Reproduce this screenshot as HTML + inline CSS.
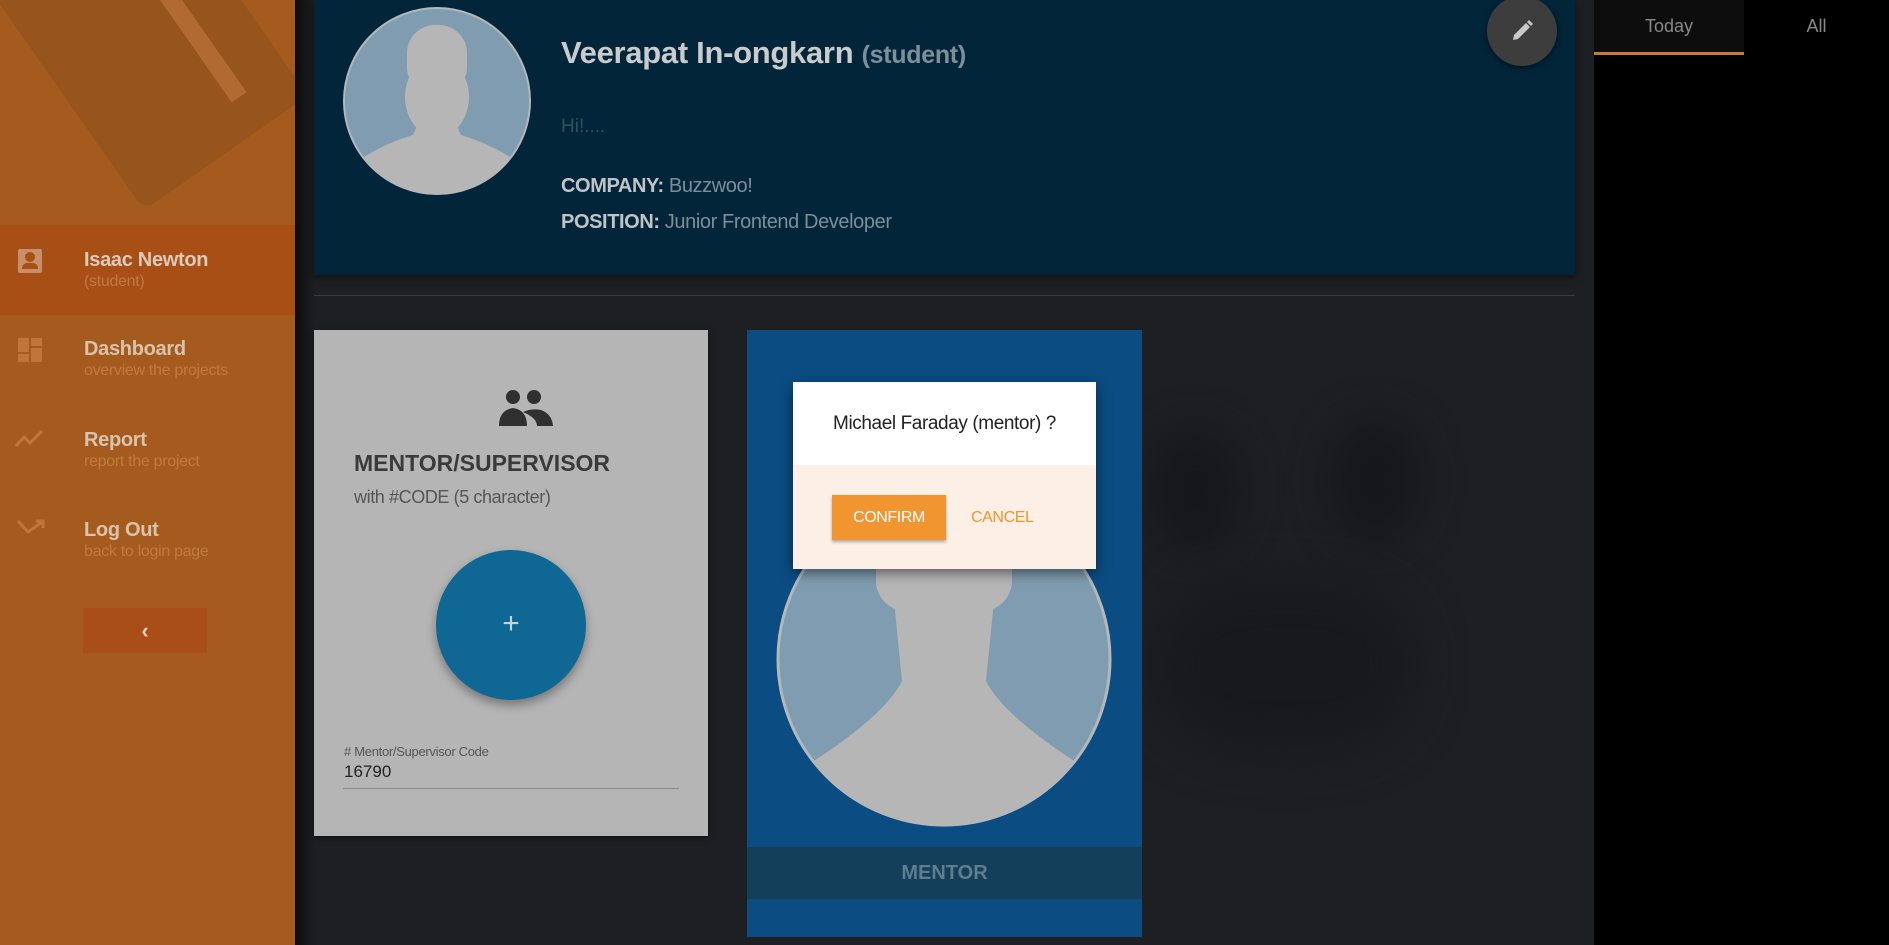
<!DOCTYPE html>
<html><head><meta charset="utf-8"><style>
*{margin:0;padding:0;box-sizing:border-box}
body{width:1889px;height:945px;overflow:hidden;background:#1e1f22;font-family:"Liberation Sans",sans-serif;position:relative}
.abs{position:absolute}
.side{left:0;top:0;width:295px;height:945px;background:#a65b1e;overflow:hidden}
.t{font-weight:bold;font-size:20px;color:#d8c4ae;letter-spacing:-0.3px}
.s{font-size:16px;color:#c17a3e;letter-spacing:-0.3px}
</style></head><body>
<div class="abs side">
 <div class="abs" style="left:40px;top:-120px;width:200px;height:300px;background:#97541c;transform:rotate(-35deg);border-radius:12px"></div>
 <div class="abs" style="left:190px;top:-30px;width:18px;height:140px;background:#b06a32;transform:rotate(-35deg)"></div>
 <div class="abs" style="left:0;top:225px;width:295px;height:90px;background:#a84f15"></div>
 <div class="abs" style="left:18px;top:249px;width:24px;height:24px;background:#c8906a;border-radius:2px"></div>
 <div class="abs" style="left:25px;top:252px;width:10px;height:10px;background:#a84f15;border-radius:50%"></div>
 <div class="abs" style="left:22px;top:263px;width:16px;height:6px;background:#a84f15;border-radius:5px 5px 0 0"></div>
 <div class="abs t" style="left:84px;top:249px;color:#dccabb">Isaac Newton</div>
 <div class="abs s" style="left:84px;top:273px">(student)</div>
 <div class="abs" style="left:18px;top:338px;width:11px;height:14px;background:#c0763a"></div>
 <div class="abs" style="left:31px;top:338px;width:11px;height:8px;background:#c0763a"></div>
 <div class="abs" style="left:18px;top:354px;width:11px;height:8px;background:#c0763a"></div>
 <div class="abs" style="left:31px;top:348px;width:11px;height:14px;background:#c0763a"></div>
 <div class="abs t" style="left:84px;top:338px">Dashboard</div>
 <div class="abs s" style="left:84px;top:362px">overview the projects</div>
 <svg class="abs" style="left:14px;top:428px" width="32" height="22"><path d="M2 18 L10 9 L16 15 L28 3" stroke="#c0763a" stroke-width="3" fill="none"/></svg>
 <div class="abs t" style="left:84px;top:429px">Report</div>
 <div class="abs s" style="left:84px;top:453px">report the project</div>
 <svg class="abs" style="left:16px;top:518px" width="30" height="20"><path d="M2 3 L12 14 L26 4 M20 3 H27 V10" stroke="#c0763a" stroke-width="3" fill="none"/></svg>
 <div class="abs t" style="left:84px;top:519px">Log Out</div>
 <div class="abs s" style="left:84px;top:543px">back to login page</div>
 <div class="abs" style="left:83px;top:608px;width:124px;height:45px;background:#a84e16;color:#e6d2c2;font-size:22px;font-weight:bold;text-align:center;line-height:45px">‹</div>
</div>
<div class="abs" style="left:295px;top:0;width:20px;height:945px;background:linear-gradient(90deg,#0c0c0e,#1e1f22)"></div>
<div class="abs" style="left:1150px;top:430px;width:90px;height:120px;border-radius:50%;background:#16171a;filter:blur(20px)"></div>
<div class="abs" style="left:1330px;top:420px;width:90px;height:120px;border-radius:50%;background:#16171a;filter:blur(20px)"></div>
<div class="abs" style="left:1160px;top:580px;width:250px;height:170px;border-radius:40%;background:#18191c;filter:blur(25px)"></div>
<div class="abs" style="left:314px;top:0;width:1261px;height:275px;background:#022539;box-shadow:0 2px 6px rgba(0,0,0,.5)"></div>
<svg class="abs" style="left:343px;top:7px" width="188" height="188"><defs><clipPath id="c1"><circle cx="94" cy="94" r="93"/></clipPath></defs><circle cx="94" cy="94" r="93" fill="#7f9cb0" stroke="#b4b8ba" stroke-width="2"/><g clip-path="url(#c1)" fill="#b6b6b6"><rect x="64" y="18" width="60" height="70" rx="28"/><ellipse cx="94" cy="90" rx="32" ry="40"/><path d="M0 165 Q30 140 70 128 L78 110 L110 110 L118 128 Q158 140 188 165 V188 H0Z"/></g></svg>
<div class="abs" style="left:561px;top:35px;font-size:31px;font-weight:bold;color:#c9cbcd;letter-spacing:-0.3px">Veerapat In-ongkarn <span style="font-size:25px;color:#7f8f9a">(student)</span></div>
<div class="abs" style="left:561px;top:116px;font-size:19px;color:#33505f">Hi!....</div>
<div class="abs" style="left:561px;top:175px;font-size:20px;color:#7d8e99;letter-spacing:-0.4px"><b style="color:#c0c4c6">COMPANY:</b> Buzzwoo!</div>
<div class="abs" style="left:561px;top:211px;font-size:20px;color:#7d8e99;letter-spacing:-0.4px"><b style="color:#c0c4c6">POSITION:</b> Junior Frontend Developer</div>
<div class="abs" style="left:1487px;top:-4px;width:70px;height:70px;border-radius:50%;background:#3d3d3d;box-shadow:0 2px 6px rgba(0,0,0,.5)"></div>
<svg class="abs" style="left:1508px;top:17px" width="28" height="28"><path d="M5 23 L6 18 L18 6 L22 10 L10 22 Z M19 5 L21 3 L25 7 L23 9 Z" fill="#c8c8c8"/></svg>
<div class="abs" style="left:314px;top:295px;width:1261px;height:1px;background:#3a3b3e"></div>
<div class="abs" style="left:1594px;top:0;width:295px;height:945px;background:#000"></div>
<div class="abs" style="left:1594px;top:0;width:150px;height:55px;background:#0d0d0d;border-bottom:3px solid #c67a35;text-align:center;line-height:53px;color:#888;font-size:18px">Today</div>
<div class="abs" style="left:1744px;top:0;width:145px;height:55px;text-align:center;line-height:53px;color:#888;font-size:18px">All</div>
<div class="abs" style="left:314px;top:330px;width:394px;height:506px;background:#b5b5b5;box-shadow:0 2px 5px rgba(0,0,0,.5)"></div>
<svg class="abs" style="left:497px;top:388px" width="58" height="40"><circle cx="16" cy="9" r="7" fill="#303030"/><circle cx="37" cy="9" r="7" fill="#303030"/><path d="M2 38 Q2 22 16 20 Q30 22 30 38Z M26 24 Q35 20 44 22 Q55 26 56 38 H40 Q40 30 26 24Z" fill="#303030"/></svg>
<div class="abs" style="left:354px;top:450px;font-size:23px;font-weight:bold;color:#3a3a3a">MENTOR/SUPERVISOR</div>
<div class="abs" style="left:354px;top:487px;font-size:18px;color:#555;letter-spacing:-0.4px">with #CODE (5 character)</div>
<div class="abs" style="left:436px;top:550px;width:150px;height:150px;border-radius:50%;background:#0f6794;box-shadow:0 5px 10px rgba(0,0,0,.35);color:#c8d4dc;font-size:30px;text-align:center;line-height:148px">+</div>
<div class="abs" style="left:344px;top:744px;font-size:13px;color:#555;letter-spacing:-0.3px">#  Mentor/Supervisor Code</div>
<div class="abs" style="left:344px;top:762px;font-size:17px;color:#222">16790</div>
<div class="abs" style="left:343px;top:788px;width:336px;height:1px;background:#8a8a8a"></div>
<div class="abs" style="left:747px;top:330px;width:395px;height:607px;background:#0b4c82"></div>
<svg class="abs" style="left:776px;top:491px" width="336" height="336"><defs><clipPath id="c2"><circle cx="168" cy="168" r="166"/></clipPath></defs><circle cx="168" cy="168" r="166" fill="#7f9cb0" stroke="#b4b8ba" stroke-width="3"/><g clip-path="url(#c2)" fill="#b6b6b6"><rect x="106" y="0" width="124" height="100" rx="30"/><rect x="100" y="40" width="136" height="80" rx="30"/><path d="M118 110 L218 110 L210 190 Q230 230 330 290 V336 H6 V290 Q106 230 126 190Z"/></g></svg>
<div class="abs" style="left:747px;top:847px;width:395px;height:52px;background:#133f5a;color:#5e7d8f;font-size:20px;font-weight:bold;text-align:center;line-height:52px">MENTOR</div>
<div class="abs" style="left:793px;top:382px;width:303px;height:187px;background:#fcf0e6;box-shadow:0 4px 12px rgba(0,0,0,.5)">
 <div style="height:83px;background:#fff;text-align:center;line-height:84px;font-size:19px;color:#222;letter-spacing:-0.4px">Michael Faraday (mentor) ?</div>
 <div class="abs" style="left:39px;top:113px;width:114px;height:45px;background:#f0952f;color:#fff;font-size:16px;text-align:center;line-height:45px;box-shadow:0 2px 3px rgba(0,0,0,.3);letter-spacing:-0.4px">CONFIRM</div>
 <div class="abs" style="left:178px;top:113px;height:45px;color:#f0952f;font-size:16px;line-height:45px;letter-spacing:-0.4px">CANCEL</div>
</div>
</body></html>
